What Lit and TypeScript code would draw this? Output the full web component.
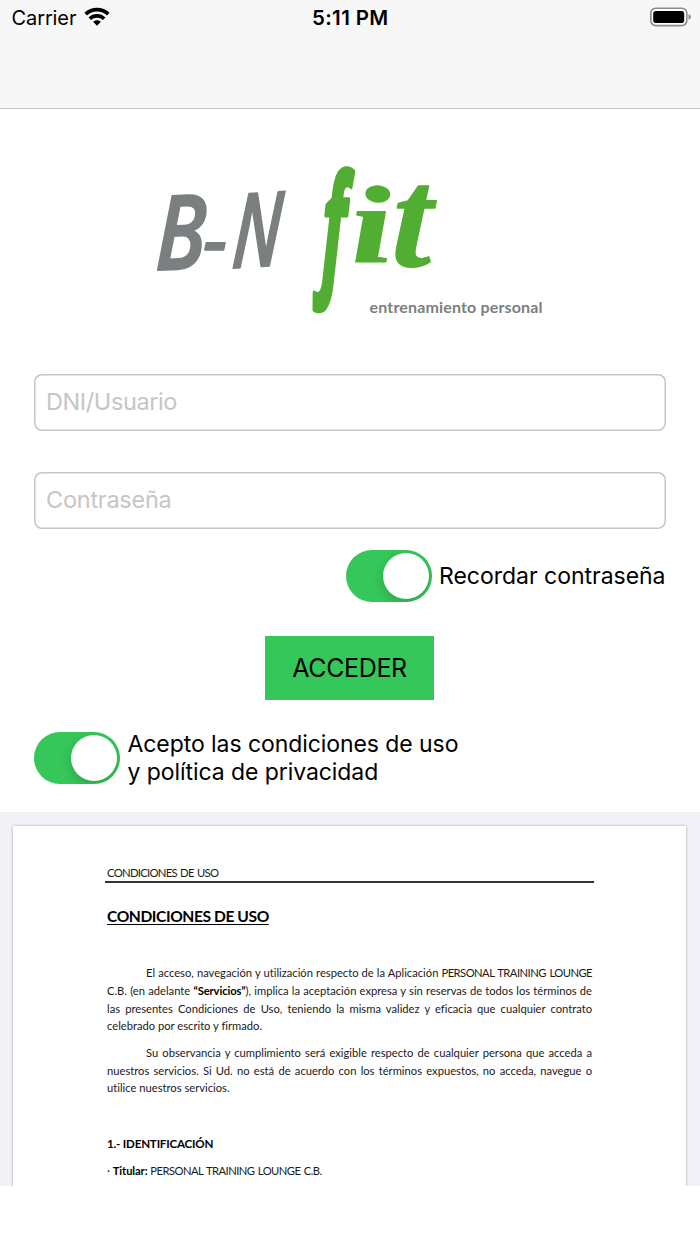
import { LitElement, html, css, svg } from "lit";
import { customElement, property } from "lit/decorators.js";

@customElement("status-bar")
class StatusBar extends LitElement {
  static styles = css`
    :host { display: block; height: 108px; background: #f7f7f7; border-bottom: 1px solid #c6c6c8; }
    .row { display: grid; grid-template-columns: 1fr auto 1fr; align-items: center; height: 36px; padding: 0 9px 0 11.5px; font-size: 20px; color: #000; }
    .left { display: flex; align-items: center; gap: 7.5px; letter-spacing: -0.1px; }
    .time { font-weight: 600; font-size: 20.5px; line-height: 24px; letter-spacing: 0.35px; margin: 0 2px 1px 0; }
    .right { display: flex; justify-content: flex-end; }
    svg { display: block; }
    .wifi { margin-bottom: 3px; }
    .battery { margin-bottom: 2px; }
  `;
  render() {
    return html`<div class="row">
      <div class="left"><span>Carrier</span>
        <svg class="wifi" width="26" height="20" viewBox="0 0 26 20">
          <g fill="none" stroke="#000" stroke-width="3.7">
            <path d="M1.7 7.1C7.9 1.1 18.1 1.1 24.3 7.1"/>
            <path d="M5.8 11.7C9.8 7.8 16.2 7.8 20.2 11.7"/>
          </g>
          <path d="M9.1 14.8C11.2 12.6 14.8 12.6 16.9 14.8L13 18.8Z"/>
        </svg>
      </div>
      <div class="time">5:11 PM</div>
      <div class="right"><svg class="battery" width="41" height="20" viewBox="0 0 41 20">
        <rect x=".8" y="1.2" width="36" height="17.4" rx="5" fill="#fff" stroke="#8b8b8b" stroke-width="1.6"/>
        <rect x="3.2" y="3.9" width="31" height="12.2" rx="2.8"/>
        <path d="M38.5 7.2Q41 8 41 10Q41 12 38.5 12.8Z" fill="#8b8b8b"/>
      </svg></div>
    </div>`;
  }
}

@customElement("brand-logo")
class BrandLogo extends LitElement {
  static styles = css`
    :host { display: block; height: 265px; }
    svg { display: block; }
    .gray { fill: #7b7f80; }
    .green { fill: #52ae32; stroke: #52ae32; stroke-linejoin: round; }
    .mark { font-family: "Open Sans", sans-serif; font-weight: 600; font-style: italic; stroke: #7b7f80; stroke-width: 2; stroke-linejoin: round; }
    .tall { font-family: "Open Sans", sans-serif; font-weight: 700; font-style: italic; stroke-width: 3; }
    .flow { font-family: "Liberation Serif", serif; font-weight: 700; font-style: italic; stroke-width: 1; }
    .tag { font-family: "Lato", sans-serif; font-weight: 700; font-size: 16px; }
  `;
  render() {
    const letter = (t: string, c: string, m: string) => svg`<text class=${c} font-size="100" transform=${m}>${t}</text>`;
    return html`<svg width="700" height="265" viewBox="0 109 700 265">
      ${letter("B", "mark gray", "matrix(.82 -.03 -.03 1.03 155 270)")}
      ${letter("-", "mark gray", "matrix(.76 0 0 .75 203 266)")}
      ${letter("N", "mark gray", "matrix(.66 -.04 -.08 1.03 231 268)")}
      ${letter("f", "tall green", "matrix(.66 0 -.02 1.42 321 277)")}
      ${letter("i", "flow green", "matrix(1.55 0 .08 1.1 352 262)")}
      ${letter("t", "flow green", "matrix(1.42 0 -.05 1.42 391 266)")}
      <text class="tag gray" x="369.5" y="313" textLength="173">entrenamiento personal</text>
    </svg>`;
  }
}

@customElement("toggle-switch")
class ToggleSwitch extends LitElement {
  @property({ type: Boolean, reflect: true }) on = false;
  static styles = css`
    :host { display: flex; box-sizing: border-box; flex: none; width: 86px; height: 52px; padding: 3px; border-radius: 26px; background: #ddd; align-items: center; overflow: hidden; }
    :host([on]) { background: #35c759; justify-content: flex-end; }
    .knob { width: 46px; height: 46px; border-radius: 50%; background: #fff; box-shadow: 0 4px 12px rgba(0,0,0,.17); }
  `;
  render() { return html`<div class="knob"></div>`; }
}

@customElement("terms-page")
class TermsPage extends LitElement {
  static styles = css`
    :host { display: block; box-sizing: border-box; height: 374px; padding: 14px 14px 0 13px; background: #f2f1f7; overflow: hidden; }
    .page { box-sizing: border-box; height: 380px; padding: 38px 92px 0 92px; background: #fff; box-shadow: 0 0 3px rgba(0,0,0,.28); color: #1a1a1a; font-family: "Lato", sans-serif; font-size: 11.2px; font-variant-ligatures: none; }
    .head { height: 17px; line-height: 18px; padding-left: 2px; border-bottom: 2px solid #333; font-size: 11.3px; letter-spacing: -0.72px; word-spacing: 1px; }
    .body { padding: 0 2px; }
    .title { margin: 23px 0 38px; height: 20px; line-height: 20px; color: #000; font-size: 15.6px; font-weight: 700; letter-spacing: -0.42px; text-decoration: underline; text-decoration-thickness: 1px; text-underline-offset: 2px; }
    .line { height: 17.75px; line-height: 18.5px; white-space: nowrap; text-align-last: justify; }
    .first { padding-left: 39px; }
    .end { text-align-last: left; }
    .para { margin-bottom: 8.8px; }
    .caps { letter-spacing: -0.52px; word-spacing: 1px; }
    b { color: #000; letter-spacing: -0.1px; }
    .section { margin-top: 37px; height: 18px; line-height: 19px; font-weight: 700; font-size: 11.6px; letter-spacing: -0.2px; color: #000; }
    .item { margin-top: 10px; line-height: 18px; }
  `;
  render() {
    return html`<div class="page">
      <div class="head">CONDICIONES DE USO</div>
      <div class="body">
        <div class="title">CONDICIONES DE USO</div>
        <div class="para">
          <div class="line first">El acceso, navegación y utilización respecto de la Aplicación <span class="caps">PERSONAL TRAINING LOUNGE</span></div>
          <div class="line">C.B. (en adelante <b>“Servicios”</b>), implica la aceptación expresa y sin reservas de todos los términos de</div>
          <div class="line">las presentes Condiciones de Uso, teniendo la misma validez y eficacia que cualquier contrato</div>
          <div class="line end">celebrado por escrito y firmado.</div>
        </div>
        <div class="para">
          <div class="line first">Su observancia y cumplimiento será exigible respecto de cualquier persona que acceda a</div>
          <div class="line">nuestros servicios. Si Ud. no está de acuerdo con los términos expuestos, no acceda, navegue o</div>
          <div class="line end">utilice nuestros servicios.</div>
        </div>
        <div class="section">1.- IDENTIFICACIÓN</div>
        <div class="item">· <b>Titular:</b> <span class="caps">PERSONAL TRAINING LOUNGE C.B.</span></div>
      </div>
    </div>`;
  }
}

@customElement("app-root")
class AppRoot extends LitElement {
  static styles = css`
    :host { display: block; width: 700px; height: 1244px; overflow: hidden; background: #fff; color: #000; font-family: "Inter", sans-serif; }
    .form { display: flex; flex-direction: column; padding: 0 34px; height: 438px; }
    input { box-sizing: border-box; width: 100%; height: 57px; margin: 0 0 41px; padding: 0 12px 2px; border: 0; box-shadow: inset 0 0 0 1.5px #c6c6c6; border-radius: 8px; background: #fff; outline: none; font: 23.5px "Inter", sans-serif; letter-spacing: -0.4px; }
    input::placeholder { color: #c5c5c7; opacity: 1; }
    .second { margin-bottom: 20.5px; letter-spacing: -0.25px; }
    .row { display: flex; align-items: center; gap: 7.5px; height: 53px; font-size: 23px; line-height: 28px; }
    .remember { justify-content: flex-end; padding-right: 0.5px; letter-spacing: -0.02px; }
    .accept { letter-spacing: -0.07px; }
    .go { align-self: center; width: 169px; height: 64px; margin: 33px 1px 31.5px 0; padding: 0; border: 0; background: #35c759; color: #000; font: 25px "Inter", sans-serif; letter-spacing: -0.35px; }
  `;
  render() {
    return html`
      <status-bar></status-bar>
      <brand-logo></brand-logo>
      <div class="form">
        <input placeholder="DNI/Usuario" />
        <input class="second" placeholder="Contraseña" />
        <div class="row remember"><toggle-switch on></toggle-switch><span>Recordar contraseña</span></div>
        <button class="go">ACCEDER</button>
        <div class="row accept"><toggle-switch on></toggle-switch><span>Acepto las condiciones de uso<br />y política de privacidad</span></div>
      </div>
      <terms-page></terms-page>`;
  }
}
